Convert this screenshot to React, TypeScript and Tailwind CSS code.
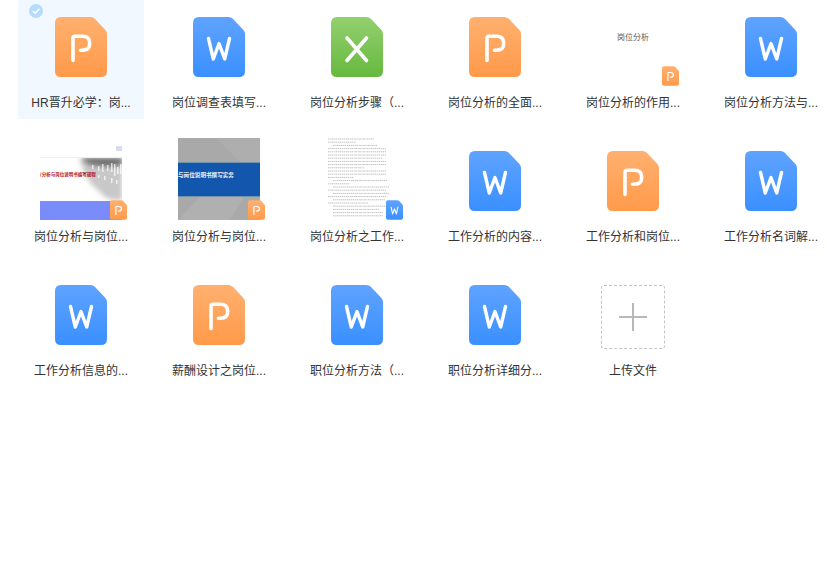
import { ReactNode } from "react";

type Kind = "p" | "w" | "x";

const GRADIENTS: Record<Kind, [string, string]> = {
  p: ["#ffb06f", "#ff9a4a"],
  w: ["#5fa3ff", "#3a90ff"],
  x: ["#93d06f", "#66b93e"],
};

function FileIcon({ kind, className }: { kind: Kind; className: string }) {
  const [from, to] = GRADIENTS[kind];
  const id = `grad-${kind}`;
  return (
    <svg viewBox="0 0 52 60" className={className}>
      <defs>
        <linearGradient id={id} x1="0" y1="0" x2="0" y2="1">
          <stop offset="0" stopColor={from} />
          <stop offset="1" stopColor={to} />
        </linearGradient>
      </defs>
      <path
        d="M6 0H35.5Q38 0 39.8 1.8L50.2 12.8Q52 14.7 52 17.2V54Q52 60 46 60H6Q0 60 0 54V6Q0 0 6 0Z"
        fill={`url(#${id})`}
      />
      {kind === "p" && (
        <path
          d="M25.500 33.200H27.500Q34.700 33.200 34.700 26.200Q34.700 19.200 27.500 19.200H20Q18 19.200 18 21.200V43.500"
          fill="none"
          stroke="#fff"
          strokeWidth="3.600"
          strokeLinecap="round"
          strokeLinejoin="round"
        />
      )}
      {kind === "w" && (
        <path
          d="M15.500 21.500L20.300 42L26 26.500L31.700 42L36.500 21.500"
          fill="none"
          stroke="#fff"
          strokeWidth="3.400"
          strokeLinecap="round"
          strokeLinejoin="round"
        />
      )}
      {kind === "x" && (
        <path
          d="M16 21L35.500 43.500M35.500 21L16 43.500"
          fill="none"
          stroke="#fff"
          strokeWidth="3.600"
          strokeLinecap="round"
        />
      )}
    </svg>
  );
}

function Thumb({ kind, children }: { kind: Kind; children: ReactNode }) {
  return (
    <div className="pt-1">
      <div className="relative mx-auto h-[82px] w-[82px]">
        <div className="h-full w-full overflow-hidden">{children}</div>
        <FileIcon kind={kind} className="absolute bottom-0 right-[-5px] h-5 w-[17px]" />
      </div>
    </div>
  );
}

function BigIcon({ kind }: { kind: Kind }) {
  return (
    <div className="flex h-[77px] items-end justify-center">
      <FileIcon kind={kind} className="h-[60px] w-[52px]" />
    </div>
  );
}

function TitleThumb() {
  return (
    <Thumb kind="p">
      <div className="h-full bg-white pt-7 text-center font-['Noto_Sans_CJK_SC',serif] text-[8px] leading-[9px] text-[#555]">
        岗位分析
      </div>
    </Thumb>
  );
}

const FLECKS = [
  [52, 7, 4], [58, 8, 5], [62, 6, 8], [67, 7, 6], [71, 5, 9], [74, 6, 12], [77, 9, 7], [80, 6, 10],
  [58, 17, 3], [64, 18, 4], [71, 20, 5], [76, 22, 4],
];

function RedThumb() {
  return (
    <Thumb kind="p">
      <div className="flex h-full flex-col bg-white">
        <div className="relative h-[63px] overflow-hidden">
          <div className="flex justify-end pt-2">
            <div className="h-[5px] w-[6px] bg-[#d9dcf0]" />
          </div>
          <div className="mt-1.5 h-px bg-[#eeeef6]" />
          <svg viewBox="0 0 82 43" className="absolute left-0 top-5 h-[43px] w-[82px]">
            <defs>
              <filter id="cloud-blur" x="-30%" y="-30%" width="160%" height="160%">
                <feGaussianBlur stdDeviation="2.500" />
              </filter>
              <filter id="fleck-blur">
                <feGaussianBlur stdDeviation="0.500" />
              </filter>
            </defs>
            <path d="M40 0H82V42Q66 44 58 32Q44 22 40 0Z" fill="#c8c8c8" filter="url(#cloud-blur)" />
            <path d="M42 0H82V6Q76 10 62 8Q46 8 42 0Z" fill="#707070" filter="url(#cloud-blur)" />
            <g filter="url(#fleck-blur)">
              {FLECKS.map(([x, y, h], i) => (
                <rect key={i} x={x} y={y} width="1.500" height={h} fill="#ffffff" opacity="0.7" />
              ))}
            </g>
          </svg>
          <div className="absolute left-0 top-[32px] whitespace-nowrap font-['Noto_Sans_CJK_SC',sans-serif] text-[4.500px] font-bold leading-2 text-[#b3122a]">
            (分析与岗位说明书编写规程
          </div>
        </div>
        <div className="h-[19px] bg-[#7a8cfa]" />
      </div>
    </Thumb>
  );
}

function BlueThumb() {
  return (
    <Thumb kind="p">
      <div className="relative h-full bg-[#a9a9a9]">
        <svg viewBox="0 0 82 82" className="absolute inset-0 h-full w-full">
          <path d="M38 0H82V24H62Z" fill="#aeaeae" />
          <path d="M0 82L22 59H66L52 82Z" fill="#b0b0b0" />
        </svg>
        <div className="relative flex h-full flex-col">
          <div className="h-6 shrink-0" />
          <div className="flex h-[35px] shrink-0 items-center whitespace-nowrap border-y border-[#6f93a8] bg-[#1257ad] pb-2 font-['Noto_Sans_CJK_SC',sans-serif] text-[5.600px] font-bold text-[#eef3fa]">
            与岗位说明书撰写实务
          </div>
        </div>
      </div>
    </Thumb>
  );
}

const DOC_LINES = [
  [0, 46], [0, 28], [5, 44], [0, 58], [0, 58], [0, 58], [0, 55], [0, 58], [0, 58], [0, 36],
  [0, 58], [0, 58], [0, 26], [5, 54], [0, 22], [5, 56], [0, 58], [5, 56], [0, 58], [5, 52],
  [0, 40], [5, 54], [5, 46], [5, 50], [5, 50],
];

function DocThumb() {
  return (
    <Thumb kind="w">
      <svg viewBox="0 0 82 82" className="h-full w-full bg-white">
        {DOC_LINES.map(([x, w], i) => (
          <line
            key={i}
            x1={12 + x}
            x2={12 + x + w}
            y1={1 + i * 3.2}
            y2={1 + i * 3.2}
            stroke="#b8b8b8"
            strokeWidth="0.9"
            strokeDasharray="1.6 0.7 1.1 0.5"
          />
        ))}
      </svg>
    </Thumb>
  );
}

function UploadBox() {
  return (
    <div className="flex h-[81px] items-end justify-center">
      <div className="flex h-16 w-16 items-center justify-center rounded-[3px] border border-dashed border-[#c4c4c4]">
        <svg viewBox="0 0 28 28" className="h-7 w-7">
          <path d="M14 0V28M0 14H28" stroke="#b8b8b8" strokeWidth="2" />
        </svg>
      </div>
    </div>
  );
}

const FILES: { label: string; media: ReactNode; selected?: boolean }[] = [
  { label: "HR晋升必学：岗...", media: <BigIcon kind="p" />, selected: true },
  { label: "岗位调查表填写...", media: <BigIcon kind="w" /> },
  { label: "岗位分析步骤（...", media: <BigIcon kind="x" /> },
  { label: "岗位分析的全面...", media: <BigIcon kind="p" /> },
  { label: "岗位分析的作用...", media: <TitleThumb /> },
  { label: "岗位分析方法与...", media: <BigIcon kind="w" /> },
  { label: "岗位分析与岗位...", media: <RedThumb /> },
  { label: "岗位分析与岗位...", media: <BlueThumb /> },
  { label: "岗位分析之工作...", media: <DocThumb /> },
  { label: "工作分析的内容...", media: <BigIcon kind="w" /> },
  { label: "工作分析和岗位...", media: <BigIcon kind="p" /> },
  { label: "工作分析名词解...", media: <BigIcon kind="w" /> },
  { label: "工作分析信息的...", media: <BigIcon kind="w" /> },
  { label: "薪酬设计之岗位...", media: <BigIcon kind="p" /> },
  { label: "职位分析方法（...", media: <BigIcon kind="w" /> },
  { label: "职位分析详细分...", media: <BigIcon kind="w" /> },
  { label: "上传文件", media: <UploadBox /> },
];

export default function App() {
  return (
    <main className="h-[577px] w-[827px] overflow-hidden bg-white pl-[18px] font-['Liberation_Sans','Noto_Sans_CJK_SC',sans-serif]">
      <div className="grid grid-cols-[repeat(6,126px)] gap-x-3 gap-y-[15px]">
        {FILES.map((f, i) => (
          <div key={i} className={`relative h-[119px] ${f.selected ? "bg-[#f1f8ff]" : ""}`}>
            {f.selected && (
              <svg viewBox="0 0 14 14" className="absolute left-[11px] top-1 h-3.5 w-3.5">
                <circle cx="7" cy="7" r="7" fill="#b3dcff" />
                <path
                  d="M4 7.2L6.200 9.300L10 5.200"
                  fill="none"
                  stroke="#fff"
                  strokeWidth="1.500"
                  strokeLinecap="round"
                  strokeLinejoin="round"
                />
              </svg>
            )}
            <div className="h-[86px]">{f.media}</div>
            <div className="mt-2 text-center text-xs leading-[18px] text-[#333]">{f.label}</div>
          </div>
        ))}
      </div>
    </main>
  );
}
